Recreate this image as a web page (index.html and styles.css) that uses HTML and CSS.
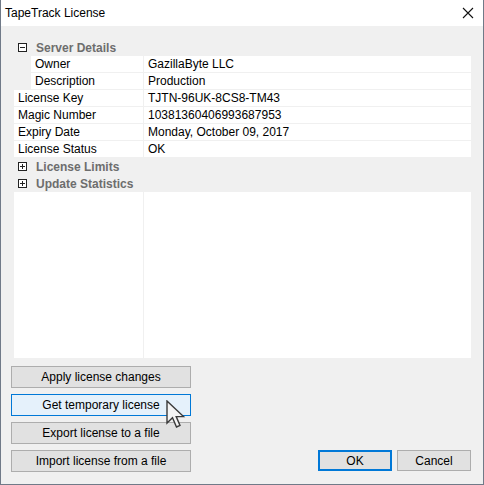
FILE: index.html
```html
<!DOCTYPE html>
<html>
<head>
<meta charset="utf-8">
<link rel="stylesheet" href="styles.css">
</head>
<body>
<div class="window">
  <div class="titlebar">
    <span class="title">TapeTrack License</span>
    <svg class="close" width="12" height="12" viewBox="0 0 12 12"><path d="M1 1 L11 11 M11 1 L1 11" stroke="#111" stroke-width="1.1" fill="none"/></svg>
  </div>
  <div class="content">
    <div class="pgrid">
      <div class="cat">
        <span class="box"><svg width="9" height="9" viewBox="0 0 9 9"><rect x="0.5" y="0.5" width="8" height="8" fill="#fff" stroke="#222"/><path d="M2 4.5 H7" stroke="#222"/></svg></span>
        <span class="catlabel">Server Details</span>
      </div>
      <div class="row sub"><div class="name">Owner</div><div class="val">GazillaByte LLC</div></div>
      <div class="row sub"><div class="name">Description</div><div class="val">Production</div></div>
      <div class="row"><div class="name">License Key</div><div class="val">TJTN-96UK-8CS8-TM43</div></div>
      <div class="row"><div class="name">Magic Number</div><div class="val">10381360406993687953</div></div>
      <div class="row"><div class="name">Expiry Date</div><div class="val">Monday, October 09, 2017</div></div>
      <div class="row"><div class="name">License Status</div><div class="val">OK</div></div>
      <div class="cat">
        <span class="box"><svg width="9" height="9" viewBox="0 0 9 9"><rect x="0.5" y="0.5" width="8" height="8" fill="#fff" stroke="#222"/><path d="M2 4.5 H7 M4.5 2 V7" stroke="#222"/></svg></span>
        <span class="catlabel">License Limits</span>
      </div>
      <div class="cat">
        <span class="box"><svg width="9" height="9" viewBox="0 0 9 9"><rect x="0.5" y="0.5" width="8" height="8" fill="#fff" stroke="#222"/><path d="M2 4.5 H7 M4.5 2 V7" stroke="#222"/></svg></span>
        <span class="catlabel">Update Statistics</span>
      </div>
      <div class="blank"><div class="bname"></div><div class="bval"></div></div>
    </div>
    <div class="bottom">
      <div class="leftbtns">
        <button class="btn wide">Apply license changes</button>
        <button class="btn wide hover">Get temporary license</button>
        <button class="btn wide">Export license to a file</button>
        <button class="btn wide">Import license from a file</button>
      </div>
      <div class="rightbtns">
        <button class="btn small default">OK</button>
        <button class="btn small">Cancel</button>
      </div>
    </div>
  </div>
  <svg class="cursor" width="22" height="32" viewBox="0 0 22 32"><path d="M1 1 L1 23 L6.5 17.8 L10.5 27 L14 25.5 L10.2 16.6 L17.5 16.6 Z" fill="#f4f4f4" stroke="#3a3a3a" stroke-width="1.4" stroke-linejoin="miter"/></svg>
</div>
</body>
</html>
```
FILE: styles.css
```css
* { box-sizing: border-box; }
html, body { margin: 0; padding: 0; }
body {
  font-family: "Liberation Sans", Arial, sans-serif;
  font-size: 12px;
  color: #000;
  background: #fff;
}
.window {
  position: relative;
  width: 484px;
  height: 485px;
  background: #f0f0f0;
  border-left: 1px solid #707a88;
  border-right: 1px solid #707a88;
  border-bottom: 1px solid #707a88;
  display: flex;
  flex-direction: column;
}
.titlebar {
  height: 26px;
  background: #fff;
  display: flex;
  align-items: center;
  justify-content: space-between;
  padding: 0 9px 0 4px;
}
.title { font-size: 12px; color: #000; }
.close { display: block; }
.content {
  flex: 1;
  display: flex;
  flex-direction: column;
  padding: 13px 12px 12px 10px;
}
.pgrid {
  margin-left: 3px;
  width: 457px;
  display: flex;
  flex-direction: column;
}
.cat {
  height: 17px;
  display: flex;
  align-items: center;
}
.box { width: 9px; height: 9px; margin-left: 4px; display: block; }
.box svg { display: block; }
.catlabel {
  margin-left: 9px;
  font-weight: bold;
  color: #6d6d6d;
  font-size: 12px;
}
.row {
  height: 17px;
  display: grid;
  grid-template-columns: 130px 1fr;
  border-bottom: 1px solid #f0f0f0;
}
.row.sub {
  margin-left: 17px;
  grid-template-columns: 113px 1fr;
}
.name, .val {
  background: #fff;
  padding-left: 4px;
  line-height: 16px;
  white-space: nowrap;
  overflow: hidden;
}
.name { border-right: 1px solid #f0f0f0; }
.blank {
  height: 166px;
  display: grid;
  grid-template-columns: 130px 1fr;
  background: #fff;
}
.bname { border-right: 1px solid #f0f0f0; }
.bottom {
  flex: 1;
  display: flex;
  justify-content: space-between;
  align-items: flex-end;
}
.leftbtns {
  display: flex;
  flex-direction: column;
  gap: 6px;
}
.rightbtns {
  display: flex;
  gap: 5px;
  margin-bottom: 1px;
}
.btn {
  font-family: "Liberation Sans", Arial, sans-serif;
  font-size: 12px;
  color: #000;
  background: #e1e1e1;
  border: 1px solid #adadad;
  padding: 0;
  margin: 0;
}
.btn.wide { width: 180px; height: 22px; }
.btn.small { width: 74px; height: 21px; }
.btn.hover { background: #e5f1fb; border-color: #0078d7; }
.btn.default { border: 2px solid #0078d7; }
.cursor {
  position: absolute;
  left: 165px;
  top: 400px;
}
```
